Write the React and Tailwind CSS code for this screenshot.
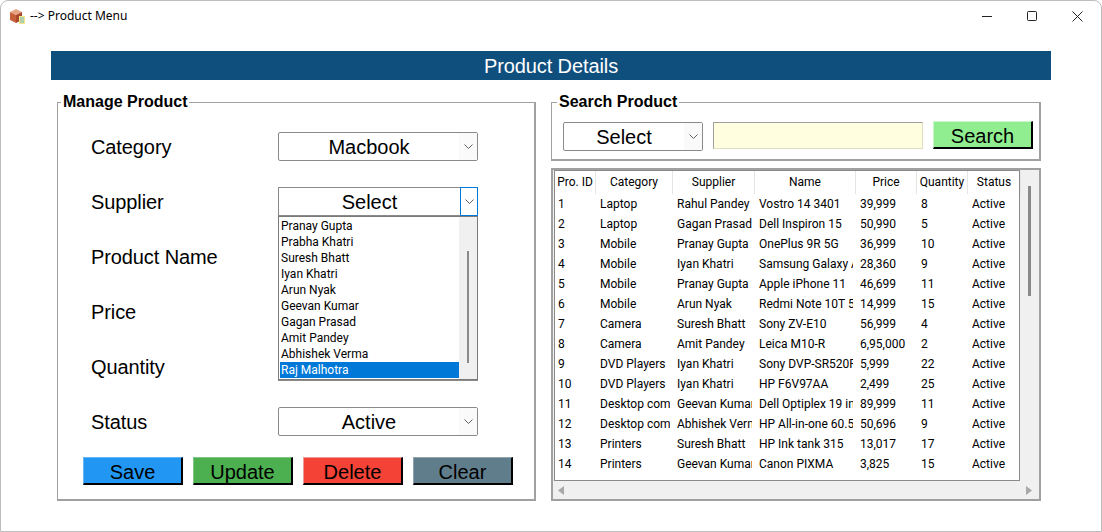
import React from 'react';

const ARIAL = 'font-["Liberation_Sans",Arial,sans-serif]';
const UI = 'font-["Roboto",sans-serif]';

const suppliers = [
  'Pranay Gupta',
  'Prabha Khatri',
  'Suresh Bhatt',
  'Iyan Khatri',
  'Arun Nyak',
  'Geevan Kumar',
  'Gagan Prasad',
  'Amit Pandey',
  'Abhishek Verma',
  'Raj Malhotra',
];

const columns = ['Pro. ID', 'Category', 'Supplier', 'Name', 'Price', 'Quantity', 'Status'];

const products = [
  ['1', 'Laptop', 'Rahul Pandey', 'Vostro 14 3401', '39,999', '8', 'Active'],
  ['2', 'Laptop', 'Gagan Prasad', 'Dell Inspiron 15', '50,990', '5', 'Active'],
  ['3', 'Mobile', 'Pranay Gupta', 'OnePlus 9R 5G', '36,999', '10', 'Active'],
  ['4', 'Mobile', 'Iyan Khatri', 'Samsung Galaxy A52', '28,360', '9', 'Active'],
  ['5', 'Mobile', 'Pranay Gupta', 'Apple iPhone 11', '46,699', '11', 'Active'],
  ['6', 'Mobile', 'Arun Nyak', 'Redmi Note 10T 5G', '14,999', '15', 'Active'],
  ['7', 'Camera', 'Suresh Bhatt', 'Sony ZV-E10', '56,999', '4', 'Active'],
  ['8', 'Camera', 'Amit Pandey', 'Leica M10-R', '6,95,000', '2', 'Active'],
  ['9', 'DVD Players', 'Iyan Khatri', 'Sony DVP-SR520P', '5,999', '22', 'Active'],
  ['10', 'DVD Players', 'Iyan Khatri', 'HP F6V97AA', '2,499', '25', 'Active'],
  ['11', 'Desktop computers', 'Geevan Kumar', 'Dell Optiplex 19 inch', '89,999', '11', 'Active'],
  ['12', 'Desktop computers', 'Abhishek Verma', 'HP All-in-one 60.5', '50,696', '9', 'Active'],
  ['13', 'Printers', 'Suresh Bhatt', 'HP Ink tank 315', '13,017', '17', 'Active'],
  ['14', 'Printers', 'Geevan Kumar', 'Canon PIXMA', '3,825', '15', 'Active'],
];

const Chevron = () => (
  <svg width="9" height="6" viewBox="0 0 9 6" fill="none" stroke="#606060" strokeWidth="1">
    <path d="M0.5 0.5 L4.5 4.5 L8.5 0.5" />
  </svg>
);

const Combo = ({ value, width = 'w-[200px]', open = false }) => (
  <div className={`flex h-[29px] ${width} items-stretch border border-[#8a8a8a] bg-white ${open ? '' : 'rounded-[2px]'}`}>
    <div className="flex-1 text-center text-[20px] leading-[29px] text-black">{value}</div>
    <div
      className={`flex w-[18px] items-center justify-center ${
        open ? 'border border-[#0078d7] -m-px w-[17px] -ml-0 bg-white' : 'bg-[#fafafa]'
      }`}
    >
      <Chevron />
    </div>
  </div>
);

const ActionButton = ({ label, className }) => (
  <button
    className={`h-[28px] w-[100px] border-t border-l border-r-2 border-b-2 border-r-black border-b-black pt-[2px] text-[20px] leading-none text-black ${className}`}
  >
    {label}
  </button>
);

const FormRow = ({ label, children }) => (
  <div className="flex h-[29px] items-center">
    <div className="w-[187px] text-[20px] tracking-[-0.1px] text-black">{label}</div>
    {children}
  </div>
);

const BlankInput = () => <div className="h-[29px] w-[200px] border border-[#8a8a8a] bg-white" />;

const Legend = ({ children, className }) => (
  <span className={`absolute -top-[10px] bg-white px-[2px] text-[16px] leading-[18px] font-bold text-black ${className}`}>
    {children}
  </span>
);

const SupplierDropdown = () => (
  <div className={`absolute top-[29px] left-0 z-10 flex h-[164px] w-[200px] border border-[#7a7a7a] bg-white ${UI}`}>
    <div className="flex-1 pt-[1px] pl-[1px]">
      {suppliers.map((name, i) => (
        <div
          key={name}
          className={`h-[16px] pl-[1px] text-[12px] leading-[16px] ${
            i === suppliers.length - 1 ? 'bg-[#0078d7] text-white' : 'text-black'
          }`}
        >
          {name}
        </div>
      ))}
    </div>
    <div className="flex w-[18px] justify-center bg-[#f0f0f0] pt-[34px]">
      <div className="h-[112px] w-[2px] bg-[#8a8a8a]" />
    </div>
  </div>
);

const ProductTable = () => {
  const grid = 'grid grid-cols-[41px_77px_82px_101px_61px_51px_53px]';
  return (
    <div className={`flex h-[333px] w-[490px] flex-col border-2 border-[#a0a0a0] bg-[#f0f0f0] ${UI}`}>
      <div className="flex flex-1">
        <div className="ml-[1px] h-[311px] w-[466px] border border-[#8a8a8a] bg-white">
          <div className={`${grid} h-[23px]`}>
            {columns.map((col) => (
              <div key={col} className="border-r border-[#e5e5e5] px-[2px]">
                <div className="overflow-hidden text-center text-[12px] leading-[23px] whitespace-nowrap text-black">
                  {col}
                </div>
              </div>
            ))}
          </div>
          {products.map((row) => (
            <div key={row[0]} className={`${grid} h-[20px]`}>
              {row.map((cell, i) => (
                <div key={i} className={`min-w-0 pr-[3px] ${i === 0 ? 'pl-[3px]' : 'pl-[4px]'}`}>
                  {/* long values get clipped at the column edge, like the tree view does */}
                  <div className="overflow-hidden text-[12px] leading-[20px] whitespace-nowrap text-black">{cell}</div>
                </div>
              ))}
            </div>
          ))}
        </div>
        <div className="flex flex-1 justify-center pt-[16px]">
          <div className="h-[110px] w-[3px] bg-[#8a8a8a]" />
        </div>
      </div>
      <div className="flex h-[18px] items-center justify-between px-[4px] pr-[6px]">
        <svg width="7" height="9" viewBox="0 0 7 9" fill="#a8a8a8">
          <path d="M7 0 L7 9 L1 4.5 Z" />
        </svg>
        <svg width="7" height="9" viewBox="0 0 7 9" fill="#a8a8a8">
          <path d="M0 0 L0 9 L6 4.5 Z" />
        </svg>
      </div>
    </div>
  );
};

export default function App() {
  return (
    <div className={`h-[532px] w-[1102px] overflow-hidden rounded-t-[8px] border border-[#bdbdbd] bg-white ${ARIAL}`}>
      {/* title bar */}
      <div className="flex h-[30px] items-center pr-[18px] pl-[8px]">
        <svg width="17" height="17" viewBox="0 0 17 17" className="mr-[4px]">
          <path d="M1 4 L7 1 L13 4 L7 7 Z" fill="#e8a585" />
          <path d="M1 4 L7 7 L7 15 L1 12 Z" fill="#c9603c" />
          <path d="M7 7 L13 4 L13 12 L7 15 Z" fill="#a9482c" />
          <rect x="10" y="8" width="6" height="8" fill="#f4e58a" />
          <path d="M11 10 H15 M11 12 H15 M11 14 H15" stroke="#6fb7c9" strokeWidth="1" />
        </svg>
        <span className='font-["Noto_Sans",sans-serif] text-[12px] text-black'>--&gt; Product Menu</span>
        <div className="ml-auto flex items-center gap-[35px]">
          <svg width="10" height="10" viewBox="0 0 10 10" stroke="#222" strokeWidth="1">
            <path d="M0 5.5 H10" />
          </svg>
          <svg width="10" height="10" viewBox="0 0 10 10" fill="none" stroke="#222" strokeWidth="1">
            <rect x="0.5" y="0.5" width="9" height="9" rx="1" />
          </svg>
          <svg width="11" height="11" viewBox="0 0 11 11" stroke="#222" strokeWidth="1">
            <path d="M0.5 0.5 L10.5 10.5 M10.5 0.5 L0.5 10.5" />
          </svg>
        </div>
      </div>

      <div className="pt-[20px] pl-[50px]">
        <div className="h-[29px] w-[1000px] bg-[#0f4f7d] pt-[1px] text-center text-[20px] leading-[29px] tracking-[-0.1px] text-white">
          Product Details
        </div>

        <div className="mt-[22px] ml-[6px] flex gap-[15px]">
          {/* manage product */}
          <div className="relative flex h-[399px] w-[479px] flex-col border-2 border-t-1 border-l-1 border-[#a0a0a0] pt-[29px] pl-[33px]">
            <Legend className="left-[3px]">Manage Product</Legend>
            <div className="flex flex-col gap-[26px]">
              <FormRow label="Category">
                <Combo value="Macbook" />
              </FormRow>
              <FormRow label="Supplier">
                <div className="relative">
                  <Combo value="Select" open />
                  <SupplierDropdown />
                </div>
              </FormRow>
              <FormRow label="Product Name">
                <BlankInput />
              </FormRow>
              <FormRow label="Price">
                <BlankInput />
              </FormRow>
              <FormRow label="Quantity">
                <BlankInput />
              </FormRow>
              <FormRow label="Status">
                <Combo value="Active" />
              </FormRow>
            </div>
            <div className="mt-[21px] -ml-[8px] flex gap-[10px]">
              <ActionButton label="Save" className="border-t-[#64b5f6] border-l-[#64b5f6] bg-[#2196f3]" />
              <ActionButton label="Update" className="border-t-[#81c784] border-l-[#81c784] bg-[#4caf50]" />
              <ActionButton label="Delete" className="border-t-[#ef9a9a] border-l-[#ef9a9a] bg-[#f44336]" />
              <ActionButton label="Clear" className="border-t-[#90a4ae] border-l-[#90a4ae] bg-[#607d8b]" />
            </div>
          </div>

          {/* search and list */}
          <div className="flex w-[490px] flex-col gap-[7px]">
            <div className="relative flex h-[59px] items-start gap-[10px] border-2 border-t-1 border-l-1 border-[#a0a0a0] pt-[19px] pl-[11px]">
              <Legend className="left-[5px]">Search Product</Legend>
              <Combo value="Select" width="w-[140px]" />
              <div className="h-[27px] w-[210px] border border-[#e0e0c0] border-t-[#a0a0a0] border-l-[#a0a0a0] bg-[#ffffe0]" />
              <ActionButton label="Search" className="-mt-px border-t-[#c8f7c8] border-l-[#c8f7c8] bg-[#90ee90]" />
            </div>
            <ProductTable />
          </div>
        </div>
      </div>
    </div>
  );
}
